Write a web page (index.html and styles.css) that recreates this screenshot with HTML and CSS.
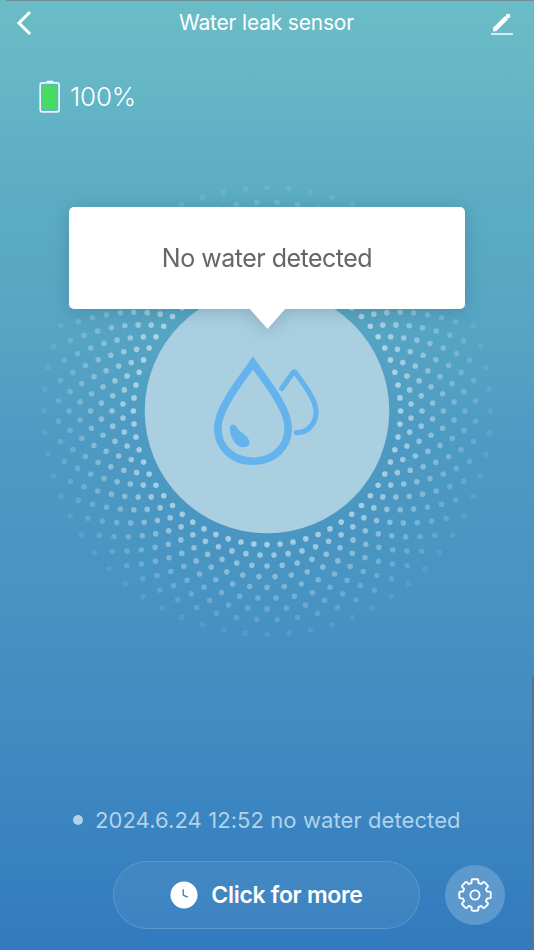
FILE: index.html
```html
<!DOCTYPE html>
<html lang="en">
<head>
<meta charset="utf-8">
<title>Water leak sensor</title>
<link rel="stylesheet" href="styles.css">
</head>
<body>
<main class="screen">
  <header class="bar">
    <svg class="back" viewBox="0 0 16 26"><path d="M14 2 3 13 14 24"/></svg>
    <h1 class="title">Water leak sensor</h1>
    <svg class="edit" viewBox="0 0 24 24"><path class="pencil" d="M3.4 15.6 15 4l3.2 3.2L6.6 18.8l-2.6.6q-1.1.1-1-1z"/><circle class="pencil" cx="18.1" cy="4" r="2.3"/><path class="rule" d="M1 22h22"/></svg>
  </header>
  <section class="battery">
    <svg class="cell" viewBox="0 0 22 34"><path class="cap" d="M7.5 3V2q0-1.3 1.3-1.3h4.4q1.3 0 1.3 1.3v1z"/><rect class="shell" x="1.2" y="2.9" width="18.9" height="28.9" rx="2"/><rect class="charge" x="3.4" y="5.4" width="14.2" height="24"/></svg>
    <span class="percent">100%</span>
  </section>
  <section class="status">
    <svg class="radar" viewBox="-230 -230 460 460">
      <g class="dots">
        <circle r="133.6" pathLength="64" opacity=".56"/>
        <circle class="odd" r="144.2" pathLength="64" opacity=".5"/>
        <circle r="155" pathLength="64" opacity=".44"/>
        <circle class="odd" r="165.8" pathLength="64" opacity=".38"/>
        <circle r="176.4" pathLength="64" opacity=".32"/>
        <circle class="odd" r="187.2" pathLength="64" opacity=".27"/>
        <circle r="197.9" pathLength="64" opacity=".22"/>
        <circle class="odd" r="208.8" pathLength="64" opacity=".17"/>
        <circle r="223.2" pathLength="64" opacity=".1"/>
      </g>
      <circle class="disc" r="122.3"/>
      <g class="drops">
        <path class="large" d="M-14-48C-27-29-49.2-3-49.2 17C-49.2 37-34 50.2-14 50.2S21.2 37 21.2 17C21.2-3-1-29-14-48Z"/>
        <path class="small" d="M14.8-22.5 26-38.5q1.2-1.5 2.4 0C38-25 49-11 49 1C49 14 39 22.2 29.5 21.6"/>
        <path class="shine" d="M-37.2 18c-.4-5.5 5.2-5.5 6.9-1.8 2.2 4.4 5.2 4.5 8.4 7.7 3.4 3.4 6.1 7.5 3.5 10.4-2.8 3-8.5 2.2-11.7-.4-4.2-3.4-6.7-10.5-7.1-15.9Z"/>
      </g>
    </svg>
    <div class="bubble">No water detected</div>
  </section>
  <p class="log"><i class="bullet"></i><span>2024.6.24 12:52 no water detected</span></p>
  <footer class="actions">
    <button class="more"><svg class="clock" viewBox="0 0 28 28"><circle cx="14" cy="14" r="13.5"/><path d="M13.2 8.3v5.3q0 .7.6.9l4 1.7"/></svg><span>Click for more</span></button>
    <button class="settings" aria-label="Settings"><svg class="gear" viewBox="-18 -18 36 36">
      <path d="M-3.4-12.1V-14.5q0-1.2 1.2-1.2h4.4q1.2 0 1.2 1.2v2.4L6.2-10.9 7.9-12.6q.9-.9 1.8 0l2.9 2.9q.9.9 0 1.8L10.9-6.2 12.1-3.4H14.5q1.2 0 1.2 1.2v4.4q0 1.2-1.2 1.2h-2.4L10.9 6.2 12.6 7.9q.9.9 0 1.8l-2.9 2.9q-.9.9-1.8 0L6.2 10.9 3.4 12.1V14.5q0 1.2-1.2 1.2h-4.4q-1.2 0-1.2-1.2v-2.4L-6.2 10.9-7.9 12.6q-.9.9-1.8 0l-2.9-2.9q-.9-.9 0-1.8L-10.9 6.2-12.1 3.4H-14.5q-1.2 0-1.2-1.2v-4.4q0-1.2 1.2-1.2h2.4L-10.9-6.2-12.6-7.9q-.9-.9 0-1.8l2.9-2.9q.9-.9 1.8 0L-6.2-10.9Z"/><circle r="4.6"/></svg></button>
  </footer>
</main>
</body>
</html>
```
FILE: styles.css
```css
* { box-sizing: border-box; }
body { margin: 0; font-family: Inter, "Liberation Sans", sans-serif; color: #fff; }
.screen {
  position: relative;
  height: 950px;
  display: flex;
  flex-direction: column;
  overflow: hidden;
  background: linear-gradient(#6abdc5 0, #66b8c5 70px, #60b1c5 135px, #5bacc4 210px, #55a3c3 350px, #4d9ac3 440px, #4995c2 560px, #428dc1 700px, #3883c0 850px, #317abe 950px);
}
.screen::before { content: ""; position: absolute; top: 0; left: 6px; right: 0; height: 1px; background: #708f98; }
.screen::after { content: ""; position: absolute; right: 0; top: 676px; bottom: 0; width: 2px; background: #5c7291; }
.bar { height: 46px; padding: 0 20px 0 16px; display: flex; align-items: center; }
.back { width: 16px; height: 26px; fill: none; stroke: #fff; stroke-width: 3; }
.title { flex: 1; margin: 0 0 1px; padding-left: 11px; text-align: center; font-size: 21px; font-weight: 400; letter-spacing: -.2px; }
.edit { width: 24px; height: 24px; margin-top: 2px; }
.pencil { fill: #fff; }
.rule { stroke: #d5edf0; stroke-width: 2; }
.battery { height: 70px; padding: 34px 0 0 39px; display: flex; gap: 9px; }
.cell { width: 22px; height: 34px; }
.cap { fill: #fff; }
.shell { fill: none; stroke: #e8f6fa; stroke-width: 1.7; }
.charge { fill: #45dc5f; }
.percent { font-size: 26px; font-weight: 300; line-height: 34px; letter-spacing: -.2px; }
.status { position: relative; height: 520px; padding: 65px 0 0 37px; }
.radar { width: 460px; height: 460px; display: block; }
.dots { fill: none; stroke: #eef8fb; stroke-width: 5.6; stroke-linecap: round; stroke-dasharray: 0 1; }
.odd { stroke-dashoffset: .5; }
.disc { fill: #a9cfe1; }
.drops { fill: none; stroke: #65b3ec; stroke-linecap: round; }
.large { stroke-width: 7.6; }
.small { stroke-width: 5.2; }
.shine { fill: #65b3ec; stroke: none; }
.bubble {
  position: absolute; left: 69px; top: 91px; width: 396px; height: 102px;
  display: flex; align-items: center; justify-content: center;
  border-radius: 5px; background: #fff; color: #666;
  font-size: 25px; letter-spacing: -.5px; filter: drop-shadow(0 2px 9px rgba(30, 70, 90, .26));
}
.bubble::after { content: ""; position: absolute; left: 180px; top: 101px; width: 37px; height: 21px; background: #fff; clip-path: polygon(0 0, 100% 0, 50% 100%); }
.log { margin: 167px 0 0; height: 34px; padding-left: 73px; display: flex; align-items: center; gap: 12px; font-size: 22px; letter-spacing: .08px; color: #b2d2ea; white-space: nowrap; }
.bullet { width: 10px; height: 10px; border-radius: 50%; background: #b2d2ea; }
.actions { margin-top: 24px; padding-left: 113px; display: flex; align-items: center; gap: 25px; }
button { font: inherit; color: inherit; padding: 0; display: flex; align-items: center; justify-content: center; }
.more { width: 307px; height: 68px; gap: 13px; border: 1px solid #5c98cc; border-radius: 34px; background: rgba(255, 255, 255, .055); font-size: 23px; font-weight: 600; letter-spacing: -.3px; }
.clock { width: 28px; height: 28px; fill: #fff; }
.clock path { fill: none; stroke: #3c81c0; stroke-width: 1.4; }
.settings { width: 60px; height: 60px; border: 0; border-radius: 50%; background: #5d99cd; }
.gear { width: 36px; height: 36px; fill: none; stroke: #fff; stroke-width: 1.9; stroke-linejoin: round; }
```
